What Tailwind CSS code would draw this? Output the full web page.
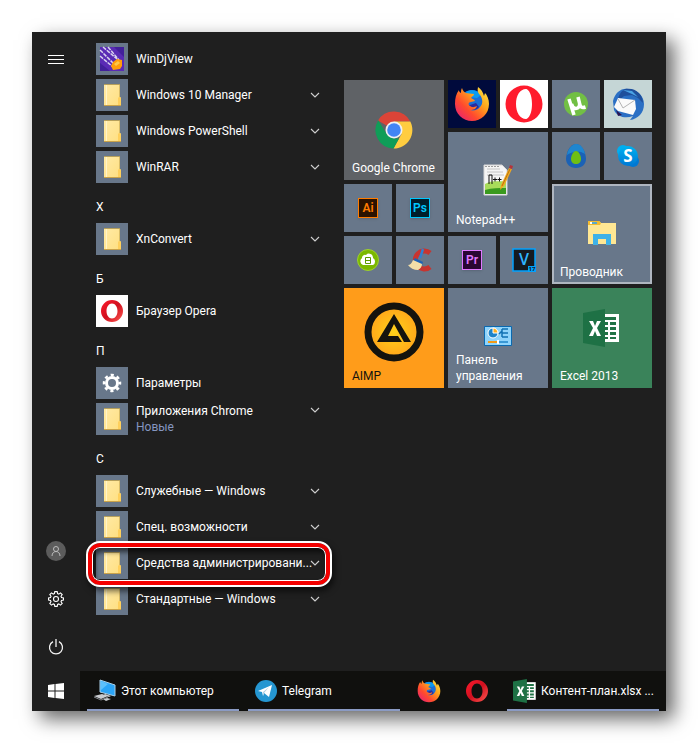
<!DOCTYPE html>
<html lang="ru">
<head>
    <meta charset="UTF-8" />
    <meta name="viewport" content="width=device-width, initial-scale=1.0"/>
    <title>Пуск</title>
    <script src="https://cdn.jsdelivr.net/npm/@tailwindcss/browser@4"></script>
</head>
<body class="bg-white min-h-screen p-8 flex font-[Roboto,sans-serif] text-xs leading-4 text-white">

    <!-- Shared icons -->
    <svg class="absolute w-0 h-0" aria-hidden="true">
        <defs>
            <linearGradient id="folderFill" x1="0" y1="0" x2="1" y2="1">
                <stop offset="0" stop-color="#ffeaa6"/><stop offset="1" stop-color="#ffdf80"/>
            </linearGradient>
            <linearGradient id="operaFill" x1="0" y1="0" x2="1" y2="1">
                <stop offset="0" stop-color="#ff1b2d"/><stop offset=".5" stop-color="#d0101f"/><stop offset="1" stop-color="#ff5a52"/>
            </linearGradient>
            <linearGradient id="foxFill" x1="1" y1="0" x2="0" y2="1">
                <stop offset="0" stop-color="#fff44f"/><stop offset=".35" stop-color="#ffa51a"/><stop offset=".65" stop-color="#ff4a2e"/><stop offset="1" stop-color="#e31587"/>
            </linearGradient>
            <linearGradient id="skypeFill" x1="0" y1="0" x2="0" y2="1">
                <stop offset="0" stop-color="#00b2f0"/><stop offset="1" stop-color="#0078d4"/>
            </linearGradient>
            <radialGradient id="aimpFill">
                <stop offset="0" stop-color="#ffd21a"/><stop offset="1" stop-color="#ffa41a"/>
            </radialGradient>
        </defs>
        <symbol id="folder" viewBox="0 0 32 32">
            <path d="M8 5h16v13l1 1v8H8z" fill="url(#folderFill)"/>
            <path d="M8 5h16v1H8z" fill="#b59f5c"/>
            <path d="M8 26h17v1H8z" fill="#c9a24a"/>
            <path d="M22 26v-7l1-1h1l1 1v7z" fill="#ffd05c"/>
            <path d="M10.500 6v20" stroke="#fff3c9" stroke-width="1"/>
            <path d="M23.500 6v12" stroke="#d9bd6a" stroke-width="1"/>
        </symbol>
        <symbol id="chevron" viewBox="0 0 10 6">
            <path d="M1 1l4 4 4-4" fill="none" stroke="#d0d0d0" stroke-width="1.100"/>
        </symbol>
        <symbol id="opera" viewBox="0 0 24 24">
            <path fill-rule="evenodd" fill="url(#operaFill)" d="M12 1a11 11 0 1 0 0 22 11 11 0 0 0 0-22zm0 3.500c3.200 0 5.500 3.300 5.500 7.500s-2.300 7.500-5.500 7.500S6.500 16.200 6.500 12 8.800 4.500 12 4.500z"/>
        </symbol>
        <symbol id="firefox" viewBox="0 0 36 36">
            <circle cx="18" cy="17" r="13" fill="#1b6fd6"/>
            <path d="M12 6c5-3 12-2 15 3l-4 3-8-1z" fill="#0a9bf0"/>
            <path d="M13 20c3 5 9 5 12 1l-3-4z" fill="#2c2a9c"/>
            <path fill="url(#foxFill)" d="M24 1c-1 4 0 6 2 8 3 4 3 9 0 12-2 3-6 4-10 3 4 0 6-1 7-4-3 1-4 2-7 0-2-1-2-4 1-4l4-1c-1-2-3-2-4-3 1-2 3-2 3-4-3 0-6-1-8-1-2-1-3-2-4-5-1 2-1 3-1 5-2-1-2-2-2-3C2 8 1 12 1 18c0 10 8 17 17 17s17-7 17-17c0-5-2-9-4-11l-1 3c-1-4-3-7-6-9z"/>
        </symbol>
        <symbol id="excel" viewBox="0 0 38 38">
            <path d="M21 5h15v28H21z" fill="#fff"/>
            <path d="M21 8h12v3H21zM21 13h4v3h-4zm6 0h6v3h-6zM21 18h4v3h-4zm6 0h6v3h-6zM21 23h4v3h-4zm6 0h6v3h-6zM21 28h4v2h-4zm6 0h6v2h-6z" fill="#217346"/>
            <path d="M0 4l22-4v38L0 34z" fill="#1e7145"/>
            <path d="M6 12h4l2 5 2-5h4l-4 7 4 8h-4l-2-5-2 5H6l4-8z" fill="#fff"/>
        </symbol>
    </svg>

    <!-- Start menu window -->
    <main class="flex-1 flex flex-col bg-[#1f1f1f] shadow-[8px_8px_18px_rgba(0,0,0,0.6)]">
        <div class="flex-1 flex">

            <!-- Left rail -->
            <nav class="w-12 shrink-0 flex flex-col pt-1">
                <button aria-label="Меню" class="h-12 flex items-center justify-center">
                    <svg class="w-4 h-4" viewBox="0 0 16 16" stroke="#fff"><path d="M0 3.500h16M0 7.500h16M0 11.500h16"/></svg>
                </button>
                <button aria-label="Пользователь" class="mt-auto h-12 flex items-center justify-center">
                    <svg class="w-5 h-5" viewBox="0 0 20 20" fill="none" stroke="#bdbdbd">
                        <circle cx="10" cy="10" r="10" fill="#5c5c5c" stroke="none"/>
                        <circle cx="10" cy="8" r="2.500"/><path d="M6 15c0-6 8-6 8 0"/>
                    </svg>
                </button>
                <button aria-label="Параметры" class="h-12 flex items-center justify-center">
                    <svg class="w-4 h-4" viewBox="0 0 16 16" fill="none" stroke="#fff" stroke-width="1.100">
                        <path d="M6.800.6h2.400l.4 2 1.200.5 1.700-1.200 1.700 1.700-1.200 1.700.5 1.200 2 .4v2.200l-2 .4-.5 1.200 1.200 1.700-1.700 1.700-1.700-1.200-1.200.5-.4 2H6.800l-.4-2-1.200-.5-1.700 1.200-1.700-1.700L3 10.700l-.5-1.200-2-.4V6.900l2-.4L3 5.300 1.800 3.600l1.700-1.700 1.700 1.200 1.200-.5z"/>
                        <circle cx="8" cy="8" r="2.500"/>
                    </svg>
                </button>
                <button aria-label="Выключение" class="h-12 flex items-center justify-center">
                    <svg class="w-4 h-4" viewBox="0 0 16 16" fill="none" stroke="#f0f0f0" stroke-width="1.300"><path d="M5 2.700a6.500 6.500 0 1 0 6 0M8 0v8"/></svg>
                </button>
            </nav>

            <!-- App list -->
            <section class="w-[264px] shrink-0 pl-4 pr-6 pt-[11px] flex flex-col gap-1">
                <button class="h-8 flex items-center gap-2 text-left">
                    <svg class="w-8 h-8 bg-[#68778a]" viewBox="0 0 32 32">
                        <path d="M4 4h24v24H4z" fill="#5a2bb5"/><path d="M4 20l10 8H4zM18 4h10v10z" fill="#42209a"/>
                        <path d="M4 7l14 14M7 4l14 12M12 4l11 13M4 13l13 11" stroke="#d9d3ee" stroke-width="1.500" stroke-dasharray="4 1"/>
                        <path d="M17 19l4-3 5 1v6l-2 3-7 1-2-4z" fill="#ff9d0a"/><path d="M18 21l4-3 2 2-4 3z" fill="#ffc94a"/>
                    </svg>
                    <span class="flex-1">WinDjView</span>
                </button>
                <button class="h-8 flex items-center gap-2 text-left">
                    <svg class="w-8 h-8 bg-[#68778a]"><use href="#folder"/></svg>
                    <span class="flex-1">Windows 10 Manager</span>
                    <svg class="w-2.5 h-1.5"><use href="#chevron"/></svg>
                </button>
                <button class="h-8 flex items-center gap-2 text-left">
                    <svg class="w-8 h-8 bg-[#68778a]"><use href="#folder"/></svg>
                    <span class="flex-1">Windows PowerShell</span>
                    <svg class="w-2.5 h-1.5"><use href="#chevron"/></svg>
                </button>
                <button class="h-8 flex items-center gap-2 text-left">
                    <svg class="w-8 h-8 bg-[#68778a]"><use href="#folder"/></svg>
                    <span class="flex-1">WinRAR</span>
                    <svg class="w-2.5 h-1.5"><use href="#chevron"/></svg>
                </button>

                <h2 class="h-8 pt-3">X</h2>
                <button class="h-8 flex items-center gap-2 text-left">
                    <svg class="w-8 h-8 bg-[#68778a]"><use href="#folder"/></svg>
                    <span class="flex-1">XnConvert</span>
                    <svg class="w-2.5 h-1.5"><use href="#chevron"/></svg>
                </button>

                <h2 class="h-8 pt-3">Б</h2>
                <button class="h-8 flex items-center gap-2 text-left">
                    <svg class="w-8 h-8 p-1 bg-white"><use href="#opera"/></svg>
                    <span class="flex-1">Браузер Opera</span>
                </button>

                <h2 class="h-8 pt-3">П</h2>
                <button class="h-8 flex items-center gap-2 text-left">
                    <svg class="w-8 h-8 bg-[#68778a]" viewBox="0 0 32 32" fill="none" stroke="#fff">
                        <circle cx="16" cy="16" r="5.500" stroke-width="3"/>
                        <circle cx="16" cy="16" r="8" stroke-width="2.500" stroke-dasharray="3.140 3.140" stroke-dashoffset="1.570"/>
                    </svg>
                    <span class="flex-1">Параметры</span>
                </button>
                <button class="h-8 flex items-start gap-2 text-left">
                    <svg class="w-8 h-8 bg-[#68778a]"><use href="#folder"/></svg>
                    <span class="flex-1">Приложения Chrome<br><span class="text-[#8596c0]">Новые</span></span>
                    <svg class="w-2.5 h-1.5 mt-1"><use href="#chevron"/></svg>
                </button>

                <h2 class="h-8 pt-3">С</h2>
                <button class="h-8 flex items-center gap-2 text-left">
                    <svg class="w-8 h-8 bg-[#68778a]"><use href="#folder"/></svg>
                    <span class="flex-1">Служебные — Windows</span>
                    <svg class="w-2.5 h-1.5"><use href="#chevron"/></svg>
                </button>
                <button class="h-8 flex items-center gap-2 text-left">
                    <svg class="w-8 h-8 bg-[#68778a]"><use href="#folder"/></svg>
                    <span class="flex-1">Спец. возможности</span>
                    <svg class="w-2.5 h-1.5"><use href="#chevron"/></svg>
                </button>
                <button class="relative h-8 flex items-center gap-2 text-left">
                    <svg class="w-8 h-8 shrink-0 bg-[#68778a]"><use href="#folder"/></svg>
                    <span class="flex-1 min-w-0 whitespace-nowrap">Средства администрировани...</span>
                    <svg class="w-2.5 h-1.5 shrink-0"><use href="#chevron"/></svg>
                    <!-- Red highlight frame -->
                    <span class="absolute z-10 -left-2 -right-2.5 -top-1 -bottom-1.5 rounded-xl border-4 border-[#f40000] outline-2 outline-white shadow-[inset_0_0_0_1px_#fff,inset_2px_4px_5px_1px_rgba(0,0,0,0.6),2px_4px_6px_2px_rgba(0,0,0,0.6)]"></span>
                </button>
                <button class="h-8 flex items-center gap-2 text-left">
                    <svg class="w-8 h-8 bg-[#68778a]"><use href="#folder"/></svg>
                    <span class="flex-1">Стандартные — Windows</span>
                    <svg class="w-2.5 h-1.5"><use href="#chevron"/></svg>
                </button>
            </section>

            <!-- Tiles -->
            <section class="pt-12 grid grid-cols-[repeat(6,48px)] auto-rows-[48px] gap-1 content-start">
                <button class="col-start-1 row-start-1 col-span-2 row-span-2 flex flex-col pb-1 bg-[#5f6266] text-left">
                    <span class="flex-1 pt-5 flex items-center justify-center">
                        <svg class="w-[38px] h-[38px]" viewBox="0 0 38 38">
                            <path d="M19 19L3 9.500A18.500 18.500 0 0 1 35.300 10.500H19z" fill="#db4437"/>
                            <path d="M19 10.500h16.300A18.500 18.500 0 0 1 18.500 37.500L26.500 23z" fill="#ffcd40"/>
                            <path d="M3.300 9.200L11.700 23 19 27.500h5L18.500 37.500A18.500 18.500 0 0 1 3.300 9.200z" fill="#0f9d58"/>
                            <circle cx="19" cy="19" r="8.500" fill="#f1f1f1"/><circle cx="19" cy="19" r="6.800" fill="#4285f4"/>
                        </svg>
                    </span>
                    <span class="px-2 whitespace-nowrap">Google Chrome</span>
                </button>
                <button aria-label="Firefox" class="col-start-3 row-start-1 flex items-center justify-center bg-[#000a3c]">
                    <svg class="w-9 h-9"><use href="#firefox"/></svg>
                </button>
                <button aria-label="Opera" class="col-start-4 row-start-1 flex items-center justify-center bg-white">
                    <svg class="w-[38px] h-[38px]" viewBox="0 0 38 38">
                        <path fill-rule="evenodd" fill="#ff1b2d" d="M19 .5a18.500 18.500 0 1 0 0 37 18.500 18.500 0 0 0 0-37zM21 4c5 0 9 6.500 9 15s-4 15-9 15c-6 0-10-6.500-10-15S15 4 21 4z"/>
                        <path fill="#ff1b2d" d="M21 3.500C26 6 27 14 27 19s-1 13-6 15.500c8 1 14-6 14-15.500S29 2.500 21 3.500z"/>
                    </svg>
                </button>
                <button aria-label="uTorrent" class="col-start-5 row-start-1 flex items-center justify-center bg-[#68778a]">
                    <svg class="w-6 h-6" viewBox="0 0 24 24">
                        <circle cx="12" cy="12" r="12" fill="#72bf44"/>
                        <path d="M5 7l5 16M7.500 12c2 7 9 5 8-1L14 5M15.500 11c1 5 3 5 6 4" fill="none" stroke="#fff" stroke-width="3.500"/>
                    </svg>
                </button>
                <button aria-label="Thunderbird" class="col-start-6 row-start-1 flex items-center justify-center bg-[#c5d6d6]">
                    <svg class="w-8 h-8" viewBox="0 0 32 32">
                        <path d="M1 13C3 5 9 0 16 1c9 0 16 7 16 15 0 9-6 15-14 16l3-4c-7 3-16 1-19-6z" fill="#2a6fc4"/>
                        <path d="M13 1c10-2 18 5 18 14l-5-5-6-3-8 1-6 5c0-5 3-10 7-12z" fill="#1e4f9c"/>
                        <path d="M11 2l9 1 6 6-6-3z" fill="#4aa3e6"/>
                        <path d="M4 22l2 6 4-1z" fill="#2b1552"/>
                        <path d="M6 10l17 2 1 9-3 6-15-4-4-4z" fill="#fafafa"/>
                        <path d="M6 11l5 9 12-8" fill="none" stroke="#b4b4b4"/>
                    </svg>
                </button>
                <button class="col-start-3 row-start-2 col-span-2 row-span-2 flex flex-col pb-1 bg-[#68778a] text-left">
                    <span class="flex-1 pt-4 flex items-center justify-center">
                        <svg class="w-8 h-8" viewBox="0 0 32 32">
                            <path d="M2 1h18l5 5v25H2z" fill="#f5f5f5" stroke="#d6d6d6"/>
                            <path d="M3 20c6-4 14-2 21-3v13H3z" fill="#a8dc5a"/><path d="M3 26c7-2 14-2 21-2v6H3z" fill="#3a9a1e"/>
                            <path d="M5 5h13M5 8h16M5 11h17" stroke="#c4c4c4"/>
                            <path d="M3.500 2.500h15" stroke="#444" stroke-dasharray="1 2"/>
                            <path d="M7 20v-9h3v9M11 15.500h4M13 13.500v4M15.500 15.500h4M17.500 13.500v4" fill="none" stroke="#111"/>
                            <path d="M18 26l1-5L27 4l3 1-8 17z" fill="#f2a81d"/><path d="M20 22l8-17" stroke="#b8730f"/>
                            <path d="M27 4l1-3 3 1-1 3z" fill="#b5343c"/>
                        </svg>
                    </span>
                    <span class="px-2">Notepad++</span>
                </button>
                <button aria-label="Эмулятор" class="col-start-5 row-start-2 flex items-center justify-center bg-[#68778a]">
                    <svg class="w-6 h-6" viewBox="0 0 24 24">
                        <path d="M12 0c6 0 10 9 10 15 0 5-4 9-10 9S2 20 2 15C2 9 6 0 12 0z" fill="#1b62b5"/>
                        <path d="M12 0c5 0 8 5 9 10-6-4-12-3-18 1C4 5 8 0 12 0z" fill="#1f86cf"/>
                        <path d="M12 7c3 0 5 5 5 8s-2 5-5 5-5-2-5-5 2-8 5-8z" fill="#6fbf14"/>
                    </svg>
                </button>
                <button aria-label="Skype" class="col-start-6 row-start-2 flex items-center justify-center bg-[#68778a]">
                    <svg class="w-[22px] h-[22px]" viewBox="0 0 22 22">
                        <circle cx="6" cy="6" r="6" fill="#00aeef"/><circle cx="16" cy="16" r="6" fill="#0078d4"/>
                        <circle cx="11" cy="11" r="10" fill="url(#skypeFill)"/>
                        <text x="11" y="17" text-anchor="middle" font-family="Open Sans, sans-serif" font-size="17" font-weight="700" fill="#fff">S</text>
                    </svg>
                </button>

                <button aria-label="Illustrator" class="col-start-1 row-start-3 flex items-center justify-center bg-[#68778a]">
                    <span class="w-5 h-5 flex items-center justify-center border border-[#ff7c00] bg-[#2a1200] text-[#ff7c00] font-semibold shadow">Ai</span>
                </button>
                <button aria-label="Photoshop" class="col-start-2 row-start-3 flex items-center justify-center bg-[#68778a]">
                    <span class="w-5 h-5 flex items-center justify-center border border-[#00c8ff] bg-[#001e2b] text-[#00c8ff] font-semibold shadow">Ps</span>
                </button>
                <button class="col-start-5 row-start-3 col-span-2 row-span-2 flex flex-col pb-0.5 border-2 border-[#afb6c0] bg-[#68778a] text-left">
                    <span class="flex-1 pt-4 flex items-center justify-center">
                        <svg class="w-7 h-6" viewBox="0 0 28 24">
                            <path d="M0 0h11l2 2h15v21H0z" fill="#ffe793"/>
                            <path d="M0 0h11l2 2-1 2H0z" fill="#f5bb2d"/><path d="M2 1h7v2H2z" fill="#fff"/><path d="M4 1h5v2H4z" fill="#5aa9c9"/>
                            <path d="M5 24V13h18v11h-5v-6h-8v6z" fill="#3fb2e8"/>
                        </svg>
                    </span>
                    <span class="px-1.5">Проводник</span>
                </button>

                <button aria-label="Облако" class="col-start-1 row-start-4 flex items-center justify-center bg-[#68778a]">
                    <svg class="w-[22px] h-[22px]" viewBox="0 0 22 22">
                        <circle cx="11" cy="11" r="10.500" fill="#7ab800" stroke="#9ed02e"/>
                        <path d="M6 16a4 4 0 0 1-1-7 3 3 0 0 1 4-3 4 4 0 0 1 7 3 4 4 0 0 1 0 7z" fill="#fff"/>
                        <path d="M8.500 8.500h5v6h-5zM8.500 11.500h5" fill="none" stroke="#5c9a00"/>
                    </svg>
                </button>
                <button aria-label="CCleaner" class="col-start-2 row-start-4 flex items-center justify-center bg-[#68778a]">
                    <svg class="w-6 h-6" viewBox="0 0 24 24">
                        <path d="M22 5a9 9 0 1 0 0 14" fill="none" stroke="#c8342f" stroke-width="5"/>
                        <path d="M15 1l-3 9" stroke="#2f7fd0" stroke-width="2.500"/>
                        <path d="M7 10l8 4-1 3-9-4z" fill="#1f62b5"/>
                        <path d="M5 12l9 4c0 3-2 5-4 6-4 0-8-2-10-5 2 0 4-2 5-5z" fill="#f3dfa8"/>
                    </svg>
                </button>
                <button aria-label="Premiere" class="col-start-3 row-start-4 flex items-center justify-center bg-[#68778a]">
                    <span class="w-5 h-5 flex items-center justify-center border border-[#e078ff] bg-[#2a0634] text-[#e078ff] font-semibold shadow">Pr</span>
                </button>
                <button aria-label="Vegas" class="col-start-4 row-start-4 flex items-center justify-center bg-[#68778a]">
                    <svg class="w-6 h-6" viewBox="0 0 24 24">
                        <path d="M1 1h22v22H1z" fill="#151a20" stroke="#00a2ff" stroke-width="1.500"/>
                        <text x="12" y="17" text-anchor="middle" font-family="Open Sans, sans-serif" font-size="16" font-weight="600" fill="#2fb4ff">V</text>
                        <path d="M16 18h8v6h-8z" fill="#00a2ff"/>
                        <text x="20" y="23" text-anchor="middle" font-family="Open Sans, sans-serif" font-size="6" font-weight="700" fill="#10202c">17</text>
                    </svg>
                </button>

                <button class="col-start-1 row-start-5 col-span-2 row-span-2 flex flex-col pb-1 bg-[#ff9c1a] text-[#14130e] text-left">
                    <span class="flex-1 pt-2 flex items-center justify-center">
                        <svg class="w-[60px] h-[60px]" viewBox="0 0 60 60">
                            <circle cx="30" cy="30" r="26" fill="url(#aimpFill)" stroke="#14130e" stroke-width="7"/>
                            <path d="M30 12l17 28h-7L30 22l-6 12h10l4 6H13z" fill="#14130e"/>
                        </svg>
                    </span>
                    <span class="px-2">AIMP</span>
                </button>
                <button class="col-start-3 row-start-5 col-span-2 row-span-2 flex flex-col pb-1 bg-[#68778a] text-left">
                    <span class="flex-1 pt-8 flex items-center justify-center">
                        <svg class="w-7 h-5" viewBox="0 0 28 20">
                            <path d="M.5.500h27v19H.5z" fill="#8fd4fb" stroke="#0b69b0"/>
                            <circle cx="9" cy="7" r="5" fill="#1d84c9" stroke="#fff"/>
                            <path d="M9 7V2a5 5 0 0 1 5 5z" fill="#ffb01f" stroke="#fff"/>
                            <path d="M15 8l3-3M18 3h6M18 7h6M18 11h6M18 3v8" fill="none" stroke="#1272b4" stroke-width="1.500"/>
                            <path d="M4 16h9" stroke="#f29b16" stroke-width="2"/><path d="M15 16h9" stroke="#1d84c9" stroke-width="1.500"/><path d="M13 14h2v4h-2z" fill="#fff"/>
                        </svg>
                    </span>
                    <span class="px-2">Панель<br>управления</span>
                </button>
                <button class="col-start-5 row-start-5 col-span-2 row-span-2 flex flex-col pb-1 bg-[#3a835a] text-left">
                    <span class="flex-1 flex items-center justify-center">
                        <svg class="w-[38px] h-[38px]"><use href="#excel"/></svg>
                    </span>
                    <span class="px-2">Excel 2013</span>
                </button>
            </section>
        </div>

        <!-- Taskbar -->
        <footer class="h-10 flex">
            <button aria-label="Пуск" class="w-12 shrink-0 flex items-center justify-center">
                <svg class="w-4 h-4" viewBox="0 0 16 16" fill="#fff"><path d="M0 2l6.500-1v6.500H0zM7.500 1L16 0v7.500H7.500zM0 8.500h6.500V15L0 14zM7.500 8.500H16V16l-8.500-1z"/></svg>
            </button>
            <div class="flex-1 min-w-0 flex px-[7px] bg-[#10100e]">
                <button class="flex-1 min-w-0 mr-[9px] pl-1.5 pt-0.5 flex items-center gap-1 border-b-2 border-[#8b9bc4] whitespace-nowrap">
                    <svg class="w-6 h-6 shrink-0" viewBox="0 0 24 24">
                        <path d="M7 1l15 5v11L7 13z" fill="#2ba4f5" stroke="#a9cfe8"/><path d="M8 2l7 3-7 6z" fill="#5cc0fb"/>
                        <path d="M1 17l8-2 6 2-7 3zM10 20l4-1 4 1-5 2zM12 15l6 2-2 1-5-2z" fill="#c9ccd0"/><path d="M1 18l7 3 7-3" fill="none" stroke="#83878c"/>
                    </svg>
                    Этот компьютер
                </button>
                <button class="flex-1 min-w-0 mr-[5px] pl-1.5 pt-0.5 flex items-center gap-1 border-b-2 border-[#8b9bc4] whitespace-nowrap">
                    <svg class="w-6 h-6 shrink-0" viewBox="0 0 24 24">
                        <circle cx="12" cy="12" r="11" fill="#2596d1"/>
                        <path d="M4 12l14-6-3 12-5-4-1 3-1-4z" fill="#fff"/><path d="M9 13l6-5-5 6-1 3z" fill="#b5cfe0"/>
                    </svg>
                    Telegram
                </button>
                <button aria-label="Firefox" class="w-12 shrink-0 flex items-center justify-center">
                    <svg class="w-6 h-6"><use href="#firefox"/></svg>
                </button>
                <button aria-label="Opera" class="w-12 shrink-0 flex items-center justify-center">
                    <svg class="w-6 h-6"><use href="#opera"/></svg>
                </button>
                <button class="flex-1 min-w-0 ml-1.5 pl-1.5 pt-0.5 flex items-center gap-1 border-b-2 border-[#8b9bc4] whitespace-nowrap">
                    <svg class="w-6 h-6 shrink-0"><use href="#excel"/></svg>
                    Контент-план.xlsx ...
                </button>
            </div>
        </footer>
    </main>

</body>
</html>
